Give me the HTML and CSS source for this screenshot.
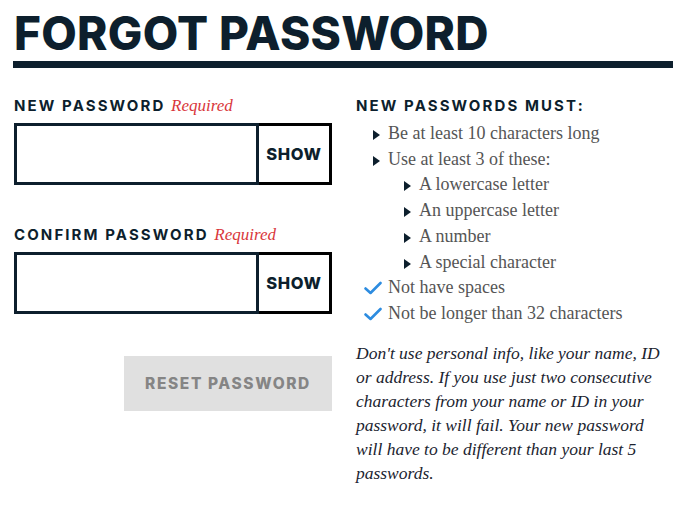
FILE: index.html
```html
<!DOCTYPE html>
<html lang="en">
<head>
<meta charset="utf-8">
<title>Forgot Password</title>
<link rel="stylesheet" href="styles.css">
</head>
<body>
<div class="page">
  <h1 class="title">FORGOT PASSWORD</h1>
  <div class="columns">
    <form class="form">
      <div class="field">
        <label class="label">NEW PASSWORD <span class="req">Required</span></label>
        <div class="input-group">
          <input class="input" type="password">
          <button type="button" class="show">SHOW</button>
        </div>
      </div>
      <div class="field">
        <label class="label">CONFIRM PASSWORD <span class="req">Required</span></label>
        <div class="input-group">
          <input class="input" type="password">
          <button type="button" class="show">SHOW</button>
        </div>
      </div>
      <div class="actions">
        <button type="button" class="reset">RESET PASSWORD</button>
      </div>
    </form>
    <aside class="rules">
      <h2 class="rules-title">NEW PASSWORDS MUST:</h2>
      <ul class="list">
        <li class="item tri">Be at least 10 characters long</li>
        <li class="item tri">Use at least 3 of these:
          <ul class="list sub">
            <li class="item tri">A lowercase letter</li>
            <li class="item tri">An uppercase letter</li>
            <li class="item tri">A number</li>
            <li class="item tri">A special character</li>
          </ul>
        </li>
        <li class="item check"><svg class="ck" viewBox="0 0 18 14" width="18" height="14"><path d="M1.5 7.5 L6.5 12 L16.5 2" fill="none" stroke="#2d8ce0" stroke-width="2.6" stroke-linecap="round" stroke-linejoin="round"/></svg>Not have spaces</li>
        <li class="item check"><svg class="ck" viewBox="0 0 18 14" width="18" height="14"><path d="M1.5 7.5 L6.5 12 L16.5 2" fill="none" stroke="#2d8ce0" stroke-width="2.6" stroke-linecap="round" stroke-linejoin="round"/></svg>Not be longer than 32 characters</li>
      </ul>
      <p class="note">Don't use personal info, like your name, ID or address. If you use just two consecutive characters from your name or ID in your password, it will fail. Your new password will have to be different than your last 5 passwords.</p>
    </aside>
  </div>
</div>
</body>
</html>
```

FILE: styles.css
```css
* { box-sizing: border-box; }
html, body { margin: 0; padding: 0; background: #fff; }
body { font-family: "Liberation Serif", serif; color: #0d1f2d; }

.page { padding: 8px 18px 0 13px; }

.title {
  margin: 0;
  font-family: Inter, "DejaVu Sans", sans-serif;
  font-weight: 800;
  font-size: 46px;
  line-height: 50px;
  letter-spacing: 0.3px;
  color: #0d1f2d;
  padding-left: 1px;
  padding-bottom: 3px;
  border-bottom: 7px solid #0d1f2d;
}

.columns {
  display: grid;
  grid-template-columns: 318px 1fr;
  column-gap: 24px;
  padding-top: 29px;
  padding-left: 1px;
}

.field { margin-bottom: 41px; }

.label {
  display: block;
  font-family: Inter, "DejaVu Sans", sans-serif;
  font-weight: 700;
  font-size: 15px;
  letter-spacing: 2.1px;
  line-height: 18px;
  color: #0d1f2d;
  margin-bottom: 8px;
}
.req {
  font-family: "Liberation Serif", serif;
  font-style: italic;
  font-weight: normal;
  font-size: 17px;
  letter-spacing: 0;
  color: #d9373c;
}

.input-group {
  display: flex;
  height: 62px;
}
.input {
  flex: 1;
  min-width: 0;
  border: 3px solid #0d1f2d;
  margin: 0;
  padding: 0 10px;
  font-size: 16px;
  outline: none;
}
.show {
  width: 73px;
  margin: 0;
  border: 3px solid #000;
  border-left: none;
  background: #fff;
  font-family: Inter, "DejaVu Sans", sans-serif;
  font-weight: 800;
  font-size: 16.5px;
  letter-spacing: 0.6px;
  color: #0d1f2d;
  padding: 0;
}

.actions {
  display: flex;
  justify-content: flex-end;
  padding-top: 1px;
}
.reset {
  width: 208px;
  height: 55px;
  border: none;
  background: #e0e0e0;
  font-family: Inter, "DejaVu Sans", sans-serif;
  font-weight: 800;
  font-size: 15.5px;
  letter-spacing: 1.6px;
  color: #858585;
  padding: 0;
}

.rules-title {
  margin: 0 0 6px;
  font-family: Inter, "DejaVu Sans", sans-serif;
  font-weight: 700;
  font-size: 15px;
  letter-spacing: 2.1px;
  line-height: 18px;
  color: #0d1f2d;
}

.list {
  list-style: none;
  margin: 0;
  padding: 0 0 0 32px;
}
.list.sub { padding-left: 31px; }
.item {
  font-size: 18px;
  line-height: 25.7px;
  color: #555;
  position: relative;
}
.tri::before {
  content: "";
  position: absolute;
  left: -15px;
  top: 9px;
  border-left: 7px solid #0d1f2d;
  border-top: 5px solid transparent;
  border-bottom: 5px solid transparent;
}
.check .ck {
  position: absolute;
  left: -24px;
  top: 6px;
}

.note {
  margin: 14px 0 0;
  font-style: italic;
  font-size: 17.5px;
  line-height: 24px;
  color: #1b2430;
  padding-right: 4px;
}
```
